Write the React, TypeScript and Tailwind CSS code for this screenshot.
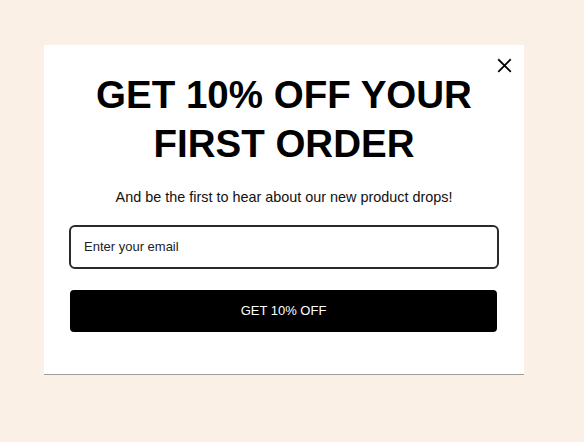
import React from "react";

export default function App() {
  return (
    <div className="w-[584px] h-[442px] bg-[#faf0e6] pt-[45px] pl-[44px]" style={{ fontFamily: '"Liberation Sans", Arial, sans-serif' }}>
      <div className="relative w-[480px] h-[330px] bg-white border-b border-[#a09c98] px-[25px] pt-[25px]">
        <button className="absolute top-[11px] right-[11px] w-[18px] h-[18px] flex items-center justify-center text-black">
          <svg width="15" height="15" viewBox="0 0 16 16" fill="none" stroke="currentColor" strokeWidth="1.9" strokeLinecap="square">
            <path d="M2 2 L14 14 M14 2 L2 14" />
          </svg>
        </button>
        <h1 className="text-center font-bold text-[38.5px] leading-[49px] text-black">
          GET 10% OFF YOUR
          <br />
          FIRST ORDER
        </h1>
        <p className="mt-[19px] text-center text-[14.4px] leading-[20px] text-[#111]">
          And be the first to hear about our new product drops!
        </p>
        <div className="mt-[18px] h-[44px] w-[430px] border-2 border-[#2a2a2a] rounded-[6px] flex items-center pl-[13px] text-[13px] text-[#222]">
          Enter your email
        </div>
        <div className="mt-[21px] ml-[1px] h-[42px] w-[427px] bg-black rounded-[4px] flex items-center justify-center text-white text-[13px]">
          GET 10% OFF
        </div>
      </div>
    </div>
  );
}
